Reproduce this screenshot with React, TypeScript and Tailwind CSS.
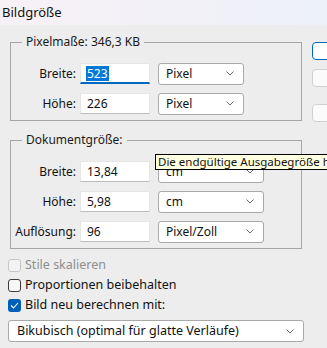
import React from "react";

const Chevron = () => (
  <svg width="8" height="5" viewBox="0 0 8 5" className="shrink-0">
    <path d="M0.5 0.5 L4 4 L7.5 0.5" stroke="#6b6b6b" strokeWidth="1" fill="none" />
  </svg>
);

function Select({ value, w }: { value: string; w: string }) {
  return (
    <div
      className={`${w} h-[22px] bg-white border border-[#a9a9a9] rounded-[3px] flex items-center justify-between pl-[7px] pr-[9px]`}
    >
      <span className="leading-none">{value}</span>
      <Chevron />
    </div>
  );
}

function Input({ value, focused }: { value: string; focused?: boolean }) {
  return (
    <div
      className={`w-[70px] h-[21px] bg-white flex items-center pl-[5px] border border-[#e6e6e6] ${
        focused ? "border-b-2 border-b-[#0067c0]" : "border-b-[#bdbdbd]"
      }`}
    >
      {focused ? (
        <span className="bg-[#0078d7] text-white px-[1px] leading-[15px]">{value}</span>
      ) : (
        <span className="px-[1px] leading-none">{value}</span>
      )}
    </div>
  );
}

function Row({
  label,
  value,
  unit,
  selW,
  focused,
}: {
  label: string;
  value: string;
  unit: string;
  selW: string;
  focused?: boolean;
}) {
  return (
    <div className="flex items-center h-[21px]">
      <div className="w-[65px] text-right">{label}</div>
      <div className="ml-[4px]">
        <Input value={value} focused={focused} />
      </div>
      <div className="ml-[8px]">
        <Select value={unit} w={selW} />
      </div>
    </div>
  );
}

function Group({ title, children }: { title: string; children: React.ReactNode }) {
  return (
    <div className="relative w-[292px] border border-[#a6a6a6] pt-[20px] pb-[6px]">
      <span className="absolute -top-[9px] left-[11px] px-[4px] bg-[#ededed] leading-[16px] text-[#1a1a1a]">
        {title}
      </span>
      <div className="flex flex-col gap-[9px]">{children}</div>
    </div>
  );
}

function Check({ label, state }: { label: string; state: "disabled" | "off" | "on" }) {
  return (
    <div className="flex items-center h-[20px]">
      {state === "on" ? (
        <div className="w-[13px] h-[13px] rounded-[3px] bg-[#005fb8] flex items-center justify-center">
          <svg width="9" height="7" viewBox="0 0 9 7">
            <path d="M1 3.5 L3.5 6 L8 1" stroke="white" strokeWidth="1.1" fill="none" />
          </svg>
        </div>
      ) : (
        <div
          className={`w-[13px] h-[13px] rounded-[3px] border ${
            state === "disabled" ? "border-[#c6c6c6] bg-[#f3f3f3]" : "border-[#3b3b3b] bg-[#f7f7f7]"
          }`}
        />
      )}
      <span className={`ml-[4px] text-[12.5px] ${state === "disabled" ? "text-[#8f8f8f]" : "text-[#111]"}`}>
        {label}
      </span>
    </div>
  );
}

export default function App() {
  return (
    <div
      className="relative w-[327px] h-[348px] overflow-hidden bg-[#ededed] text-[12px] text-[#111]"
      style={{ fontFamily: '"Noto Sans", "Open Sans", sans-serif' }}
    >
      <div className="h-[25px] bg-gradient-to-r from-[#f7f1f6] to-[#edf1f8] flex items-center pl-[2px] text-[13px] text-[#111]">
        Bildgröße
      </div>
      <div className="flex">
        <div className="w-[312px] pl-[8px]">
          <div className="ml-[2px] mt-[17px]">
            <Group title="Pixelmaße: 346,3 KB">
              <Row label="Breite:" value="523" unit="Pixel" selW="w-[86px]" focused />
              <Row label="Höhe:" value="226" unit="Pixel" selW="w-[86px]" />
            </Group>
          </div>
          <div className="ml-[2px] mt-[19px]">
            <Group title="Dokumentgröße:">
              <Row label="Breite:" value="13,84" unit="cm" selW="w-[106px]" />
              <Row label="Höhe:" value="5,98" unit="cm" selW="w-[106px]" />
              <Row label="Auflösung:" value="96" unit="Pixel/Zoll" selW="w-[106px]" />
            </Group>
          </div>
          <div className="mt-[6px] flex flex-col">
            <Check label="Stile skalieren" state="disabled" />
            <Check label="Proportionen beibehalten" state="off" />
            <Check label="Bild neu berechnen mit:" state="on" />
          </div>
          <div className="mt-[5px] w-[296px] h-[22px] bg-white border border-[#a9a9a9] rounded-[3px] flex items-center justify-between pl-[8px] pr-[9px]">
            <span className="leading-none text-[12.5px]">Bikubisch (optimal für glatte Verläufe)</span>
            <Chevron />
          </div>
        </div>
        <div className="ml-[8px] mt-[17px] flex flex-col">
          <div className="w-[24px] h-[18px] rounded-[4px] border border-[#0067c0] bg-white" />
          <div className="mt-[9px] w-[24px] h-[18px] rounded-[4px] border border-[#d0d0d0] bg-[#fbfbfb]" />
          <div className="mt-[17px] w-[24px] h-[18px] rounded-[4px] border border-[#d0d0d0] bg-[#fbfbfb]" />
        </div>
      </div>
      <div className="absolute left-[155px] top-[154px] h-[16px] bg-[#ffffe1] border border-black flex items-center pl-[2px] pr-[4px] whitespace-nowrap text-[11.5px] leading-none">
        Die endgültige Ausgabegröße hängt von der Auflösung ab
      </div>
    </div>
  );
}
